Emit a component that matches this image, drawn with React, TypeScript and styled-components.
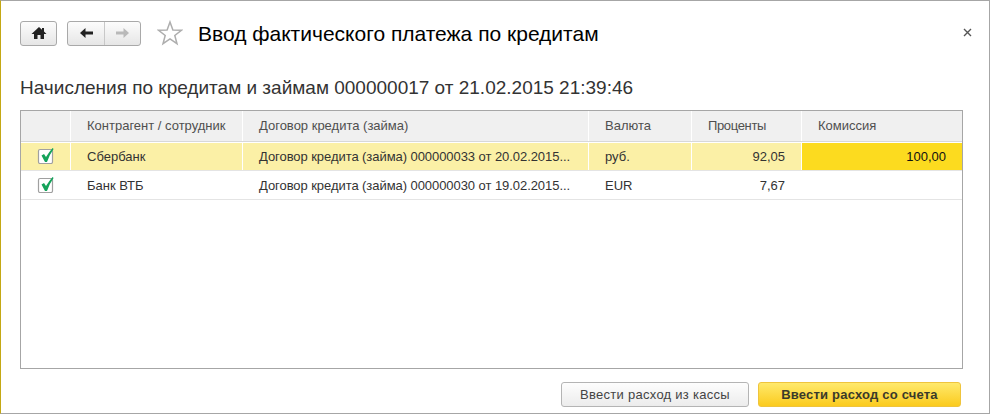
import styled, { createGlobalStyle } from 'styled-components'

const GlobalStyle = createGlobalStyle`
  html, body {
    margin: 0;
    padding: 0;
    background: #fff;
  }
`

const columns = '50px 172px 346px 103px 110px 1fr'

const Window = styled.div`
  box-sizing: border-box;
  width: 990px;
  height: 414px;
  display: flex;
  flex-direction: column;
  background: #fff;
  border: 1px solid #a6a6a6;
  border-left-color: #c4a814;
  padding: 19px 26px 0 19px;
  font-family: 'Liberation Sans', Arial, sans-serif;
  position: relative;
`

const Toolbar = styled.div`
  display: flex;
  align-items: center;
  height: 26px;
`

const NavGroup = styled.div`
  box-sizing: border-box;
  display: flex;
  height: 25px;
  margin-right: 10px;
  border: 1px solid #a9a9a9;
  border-radius: 3px;
  background: linear-gradient(#fcfcfc, #e6e6e6);
`

const NavButton = styled.div<{ $width: number; $divider?: boolean }>`
  box-sizing: border-box;
  width: ${(p) => p.$width}px;
  display: flex;
  align-items: center;
  justify-content: center;
  border-left: ${(p) => (p.$divider ? '1px solid #c8c8c8' : 'none')};
`

const Star = styled.svg`
  width: 26px;
  height: 26px;
  margin: 0 15px 0 6px;
`

const Title = styled.h1`
  margin: 2px 0 0;
  font-size: 21px;
  font-weight: 400;
  color: #000;
  line-height: 26px;
`

const Close = styled.svg`
  position: absolute;
  top: 27px;
  right: 17px;
  width: 9px;
  height: 9px;
`

const Subtitle = styled.h2`
  margin: 31px 0 0;
  font-size: 19px;
  font-weight: 400;
  line-height: 22px;
  color: #333;
`

const Table = styled.div`
  box-sizing: border-box;
  width: 943px;
  height: 259px;
  margin-top: 11px;
  border: 1px solid #a6a6a6;
`

const HeaderRow = styled.div`
  display: grid;
  grid-template-columns: ${columns};
  height: 30px;
  background: #f0f0f0;
  border-bottom: 1px solid #d8d8d8;
`

const HeaderCell = styled.div<{ $last?: boolean; $tight?: boolean }>`
  display: flex;
  align-items: center;
  padding: 0 0 2px 16px;
  font-size: 13px;
  letter-spacing: ${(p) => (p.$tight ? '-0.35px' : '0')};
  color: #4f4f4f;
  white-space: nowrap;
  border-right: ${(p) => (p.$last ? 'none' : '1px solid #fff')};
`

const Row = styled.div<{ $active?: boolean }>`
  display: grid;
  grid-template-columns: ${columns};
  height: ${(p) => (p.$active ? '27px' : '28px')};
  background: ${(p) => (p.$active ? '#fbf0a6' : '#fff')};
  border-top: ${(p) => (p.$active ? '1px solid #fff' : 'none')};
  border-bottom: 1px solid #e4e4e4;
`

const Cell = styled.div<{ $right?: boolean; $current?: boolean; $last?: boolean; $tight?: boolean }>`
  display: flex;
  align-items: center;
  justify-content: ${(p) => (p.$right ? 'flex-end' : 'flex-start')};
  padding: ${(p) => (p.$right ? '0 16px 0 0' : '0 0 0 16px')};
  font-size: 13px;
  letter-spacing: ${(p) => (p.$tight ? '-0.06px' : '0')};
  color: ${(p) => (p.$current ? '#111' : '#333')};
  white-space: nowrap;
  overflow: hidden;
  background: ${(p) => (p.$current ? '#fcdb1f' : 'transparent')};
  border-right: ${(p) => (p.$last ? 'none' : '1px solid #fff')};
`

const CheckCell = styled.div`
  display: flex;
  align-items: center;
  justify-content: center;
  border-right: 1px solid #fff;
`

const CheckIcon = styled.svg`
  width: 17px;
  height: 18px;
  margin-top: -3px;
`

const Footer = styled.div`
  display: flex;
  justify-content: flex-end;
  gap: 9px;
  margin-top: 13px;
  width: 941px;
`

const FooterButton = styled.div<{ $primary?: boolean }>`
  box-sizing: border-box;
  width: ${(p) => (p.$primary ? '203px' : '188px')};
  height: 25px;
  display: flex;
  align-items: center;
  justify-content: center;
  border-radius: 3px;
  font-size: 13px;
  letter-spacing: ${(p) => (p.$primary ? '0.2px' : '0.27px')};
  font-weight: ${(p) => (p.$primary ? 700 : 400)};
  color: ${(p) => (p.$primary ? '#3a3a2a' : '#444')};
  border: 1px solid ${(p) => (p.$primary ? '#efc43c' : '#b4b4b4')};
  background: ${(p) =>
    p.$primary ? 'linear-gradient(#ffe96b, #fbcb1e)' : 'linear-gradient(#fdfdfd, #ececec)'};
`

const Check = () => (
  <CheckIcon viewBox="0 0 17 18">
    <rect x="1.5" y="3.5" width="14" height="14" rx="1.5" fill="#fff" stroke="#a0a0a0" strokeWidth="1.2" />
    <path d="M4.5 9.5 L7 8 L9 11 Q12 6 15.6 2 L16.6 3 Q12.5 8.5 10 16 H8 Z" fill="#14a35a" />
  </CheckIcon>
)

const data = [
  { name: 'Сбербанк', contract: 'Договор кредита (займа) 000000033 от 20.02.2015...', currency: 'руб.', percent: '92,05', fee: '100,00', active: true },
  { name: 'Банк ВТБ', contract: 'Договор кредита (займа) 000000030 от 19.02.2015...', currency: 'EUR', percent: '7,67', fee: '', active: false },
]

export default function App() {
  return (
    <Window>
      <GlobalStyle />
      <Toolbar>
        <NavGroup>
          <NavButton $width={35}>
            <svg width="16" height="14" viewBox="0 0 16 14">
              <path d="M8 1 L11 3.8 V2 H13 V5.6 L15.5 8 H13 V13 H9.5 V9 H6.5 V13 H3 V8 H0.5 Z" fill="#222" />
            </svg>
          </NavButton>
        </NavGroup>
        <NavGroup>
          <NavButton $width={36}>
            <svg width="15" height="12" viewBox="0 0 15 12">
              <path d="M1 6 L6.5 1 V4.5 H14 V7.5 H6.5 V11 Z" fill="#222" />
            </svg>
          </NavButton>
          <NavButton $width={36} $divider>
            <svg width="15" height="12" viewBox="0 0 15 12">
              <path d="M14 6 L8.5 1 V4.5 H1 V7.5 H8.5 V11 Z" fill="#b9b9b9" />
            </svg>
          </NavButton>
        </NavGroup>
        <Star viewBox="0 0 26 26">
          <path
            d="M13 2 L15.9 10 L24.4 10.3 L17.8 15.5 L20 23.7 L13 19 L6 23.7 L8.2 15.5 L1.6 10.3 L10.1 10 Z"
            fill="#fff"
            stroke="#aeaeae"
            strokeWidth="1.5"
          />
        </Star>
        <Title>Ввод фактического платежа по кредитам</Title>
      </Toolbar>
      <Close viewBox="0 0 9 9">
        <path d="M1 1 L8 8 M8 1 L1 8" stroke="#555" strokeWidth="1.4" />
      </Close>
      <Subtitle>Начисления по кредитам и займам 000000017 от 21.02.2015 21:39:46</Subtitle>
      <Table>
        <HeaderRow>
          <HeaderCell />
          <HeaderCell>Контрагент / сотрудник</HeaderCell>
          <HeaderCell>Договор кредита (займа)</HeaderCell>
          <HeaderCell>Валюта</HeaderCell>
          <HeaderCell $tight>Проценты</HeaderCell>
          <HeaderCell $last>Комиссия</HeaderCell>
        </HeaderRow>
        {data.map((row) => (
          <Row key={row.name} $active={row.active}>
            <CheckCell>
              <Check />
            </CheckCell>
            <Cell>{row.name}</Cell>
            <Cell $tight>{row.contract}</Cell>
            <Cell>{row.currency}</Cell>
            <Cell $right>{row.percent}</Cell>
            <Cell $right $last $current={row.active}>
              {row.fee}
            </Cell>
          </Row>
        ))}
      </Table>
      <Footer>
        <FooterButton>Ввести расход из кассы</FooterButton>
        <FooterButton $primary>Ввести расход со счета</FooterButton>
      </Footer>
    </Window>
  )
}
